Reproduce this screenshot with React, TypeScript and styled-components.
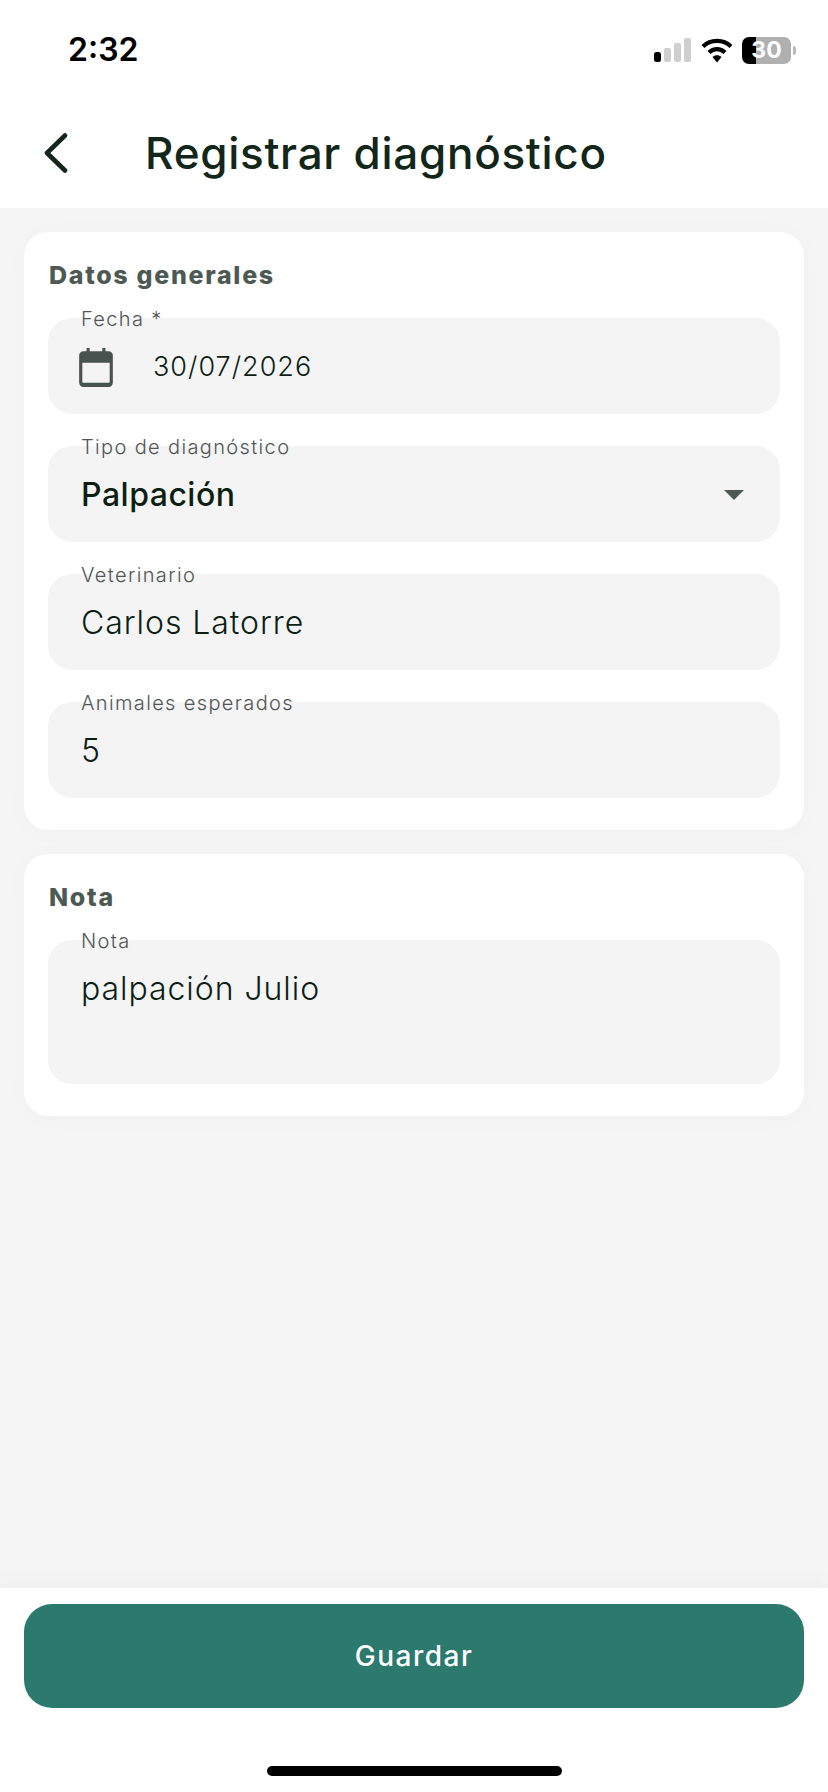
import React from "react";
import styled, { createGlobalStyle } from "styled-components";

const Global = createGlobalStyle`
  html, body { margin: 0; padding: 0; background: #f5f5f5; }
  * { box-sizing: border-box; }
  #root { width: 828px; height: 1792px; }
`;

const Screen = styled.div`
  width: 828px;
  height: 1792px;
  display: flex;
  flex-direction: column;
  font-family: Inter, "Liberation Sans", sans-serif;
  color: #12261a;
  background: #f5f5f5;
  overflow: hidden;
`;

const TopArea = styled.header`
  height: 208px;
  flex: none;
  background: #ffffff;
  display: flex;
  flex-direction: column;
`;

const StatusBar = styled.div`
  height: 100px;
  padding: 30px 32px 0 68px;
  display: flex;
  justify-content: space-between;
  align-items: flex-start;
`;

const Clock = styled.span`
  font-size: 32px;
  line-height: 40px;
  font-weight: 600;
  color: #000;
`;

const StatusIcons = styled.div`
  display: flex;
  align-items: center;
  height: 30px;
  margin-top: 5px;
  gap: 9px;
`;

const Battery = styled.div`
  position: relative;
  width: 49px;
  height: 27px;
  border-radius: 7px;
  overflow: hidden;
  background: linear-gradient(to right, #000 0 14px, #b0b0b0 14px);
  color: #fff;
  font-size: 23px;
  font-weight: 700;
  line-height: 27px;
  text-align: center;
`;

const BatteryWrap = styled.div`
  display: flex;
  align-items: center;
  gap: 2px;
`;

const BatteryTip = styled.div`
  width: 3px;
  height: 9px;
  background: #b9b9b9;
  border-radius: 0 3px 3px 0;
`;

const NavBar = styled.div`
  display: flex;
  align-items: center;
  height: 108px;
  padding: 0 0 3px 40px;
`;

const BackIcon = styled.svg`
  width: 30px;
  height: 40px;
  flex: none;
`;

const Title = styled.h1`
  margin: 0 0 0 75px;
  font-size: 44px;
  line-height: 56px;
  font-weight: 500;
  letter-spacing: 0.72px;
  color: #12261a;
`;

const Body = styled.main`
  flex: 1;
  display: flex;
  flex-direction: column;
  gap: 24px;
  padding: 24px 24px 0;
`;

const Card = styled.section`
  background: #fff;
  border-radius: 24px;
  padding: 27px 24px 32px;
  display: flex;
  flex-direction: column;
  box-shadow: 0 2px 24px rgba(20, 50, 40, 0.025);
`;

const CardTitle = styled.h2`
  margin: 0 0 26px 1px;
  font-size: 25px;
  line-height: 33px;
  font-weight: 800;
  letter-spacing: 1.7px;
  color: #4d5a54;
`;

const Fields = styled.div`
  display: flex;
  flex-direction: column;
  gap: 32px;
`;

const Field = styled.div<{ $tall?: boolean }>`
  position: relative;
  height: ${(p) => (p.$tall ? "144px" : "96px")};
  background: #f4f4f4;
  border-radius: 24px;
  padding: ${(p) => (p.$tall ? "29px" : "2px")} 32px 0 33px;
  display: flex;
  align-items: ${(p) => (p.$tall ? "flex-start" : "center")};
  justify-content: space-between;
`;

const FloatLabel = styled.label`
  position: absolute;
  left: 33px;
  top: -11px;
  font-size: 20px;
  line-height: 24px;
  font-weight: 300;
  letter-spacing: 1.36px;
  color: #4f5754;
`;

const Value = styled.span<{ $strong?: boolean }>`
  font-size: 32px;
  line-height: 40px;
  letter-spacing: ${(p) => (p.$strong ? "0.5px" : "0.95px")};
  font-weight: ${(p) => (p.$strong ? 500 : 300)};
  color: #0d1f14;
`;

const DateValue = styled.span`
  font-size: 27px;
  line-height: 36px;
  font-weight: 300;
  letter-spacing: 1px;
  color: #0d1f14;
`;

const DateRow = styled.div`
  display: flex;
  align-items: center;
  gap: 39px;
  margin-left: -3px;
`;

const CalendarIcon = styled.svg`
  width: 36px;
  height: 40px;
  flex: none;
`;

const Caret = styled.svg`
  width: 20px;
  height: 10px;
  flex: none;
  margin-right: 4px;
`;

const BottomBar = styled.footer`
  height: 204px;
  flex: none;
  background: #fff;
  padding: 16px 24px 0;
  display: flex;
  flex-direction: column;
  align-items: center;
  box-shadow: 0 -4px 24px rgba(0, 0, 0, 0.035);
`;

const SaveButton = styled.button`
  width: 780px;
  height: 104px;
  flex: none;
  border: 0;
  border-radius: 28px;
  background: #2b7a6d;
  color: #fff;
  font-family: inherit;
  font-size: 28px;
  font-weight: 500;
  letter-spacing: 1.5px;
`;

const HomeIndicator = styled.div`
  width: 295px;
  height: 10px;
  margin-top: 58px;
  border-radius: 5px;
  background: #000;
`;

export default function App() {
  return (
    <Screen>
      <Global />
      <TopArea>
        <StatusBar>
          <Clock>2:32</Clock>
          <StatusIcons>
            <svg width="38" height="24" viewBox="0 0 38 24">
              <rect x="0" y="14" width="7" height="10" rx="2.5" fill="#000" />
              <rect x="10" y="10" width="7" height="14" rx="2" fill="#cfcfcf" />
              <rect x="20" y="5" width="7" height="19" rx="2" fill="#cfcfcf" />
              <rect x="30" y="0" width="7" height="24" rx="2" fill="#cfcfcf" />
            </svg>
            <svg width="32" height="26" viewBox="0 0 32 26">
              <path d="M2 9.5C9.5 2 22.5 2 30 9.5" fill="none" stroke="#000" strokeWidth="4.2" />
              <path d="M8 15.5C12.5 11 19.5 11 24 15.5" fill="none" stroke="#000" strokeWidth="4.2" />
              <path d="M11.5 20 16 25.5 20.5 20C18 17.6 14 17.6 11.5 20Z" fill="#000" />
            </svg>
            <BatteryWrap>
              <Battery>30</Battery>
              <BatteryTip />
            </BatteryWrap>
          </StatusIcons>
        </StatusBar>
        <NavBar>
          <BackIcon viewBox="0 0 30 40">
            <path d="M25 2.5 7 20l18 17.5" fill="none" stroke="#12261a" strokeWidth="4.6" strokeLinecap="round" strokeLinejoin="round" />
          </BackIcon>
          <Title>Registrar diagnóstico</Title>
        </NavBar>
      </TopArea>
      <Body>
        <Card>
          <CardTitle>Datos generales</CardTitle>
          <Fields>
            <Field>
              <FloatLabel>Fecha *</FloatLabel>
              <DateRow>
                <CalendarIcon viewBox="0 0 34 38">
                  <path
                    d="M5 4h3V1h3v3h12V1h3v3h3a4 4 0 0 1 4 4v26a4 4 0 0 1-4 4H5a4 4 0 0 1-4-4V8a4 4 0 0 1 4-4Zm-1 11v18a1 1 0 0 0 1 1h24a1 1 0 0 0 1-1V15H4Z"
                    fill="#48524e"
                    fillRule="evenodd"
                  />
                </CalendarIcon>
                <DateValue>30/07/2026</DateValue>
              </DateRow>
            </Field>
            <Field>
              <FloatLabel>Tipo de diagnóstico</FloatLabel>
              <Value $strong>Palpación</Value>
              <Caret viewBox="0 0 20 10">
                <path d="M0 0h20L10 10Z" fill="#4d5a54" />
              </Caret>
            </Field>
            <Field>
              <FloatLabel>Veterinario</FloatLabel>
              <Value>Carlos Latorre</Value>
            </Field>
            <Field>
              <FloatLabel>Animales esperados</FloatLabel>
              <Value>5</Value>
            </Field>
          </Fields>
        </Card>
        <Card>
          <CardTitle>Nota</CardTitle>
          <Fields>
            <Field $tall>
              <FloatLabel>Nota</FloatLabel>
              <Value>palpación Julio</Value>
            </Field>
          </Fields>
        </Card>
      </Body>
      <BottomBar>
        <SaveButton>Guardar</SaveButton>
        <HomeIndicator />
      </BottomBar>
    </Screen>
  );
}
